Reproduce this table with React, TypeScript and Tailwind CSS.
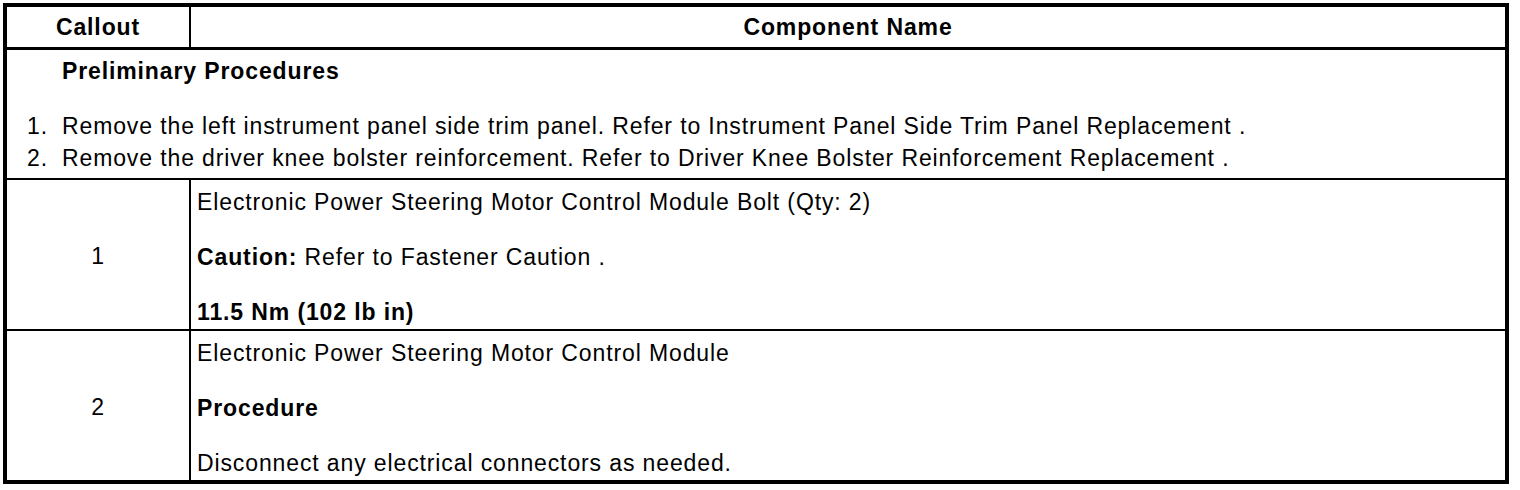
export default function App() {
  return (
    <div className="w-[1520px] h-[490px] bg-white p-[3px] font-['Liberation_Sans',Arial,Helvetica,sans-serif] text-[23px] tracking-[0.88px] text-black">
      <div className="w-[1506px] border-4 border-black">
        <div className="grid grid-cols-[184px_1fr] h-[43px] border-b-[3px] border-black font-bold">
          <div className="flex items-center justify-center border-r-2 border-black">Callout</div>
          <div className="flex items-center justify-center">Component Name</div>
        </div>

        <div className="border-b-2 border-black pt-[7px] pb-[4px]">
          <div className="pl-[55px] font-bold leading-[28px]">Preliminary Procedures</div>
          <ol className="mt-[25px] leading-[32px]">
            <li className="flex">
              <span className="w-[55px] pl-[20px]">1.</span>
              <span>Remove the left instrument panel side trim panel. Refer to Instrument Panel Side Trim Panel Replacement .</span>
            </li>
            <li className="flex">
              <span className="w-[55px] pl-[20px]">2.</span>
              <span>Remove the driver knee bolster reinforcement. Refer to Driver Knee Bolster Reinforcement Replacement .</span>
            </li>
          </ol>
        </div>

        <div className="grid grid-cols-[184px_1fr] border-b-2 border-black">
          <div className="flex items-center justify-center border-r-2 border-black pt-[4px]">1</div>
          <div className="pl-[6px] pt-[9px] pb-[4px] leading-[26px] flex flex-col gap-[29px]">
            <p>Electronic Power Steering Motor Control Module Bolt (Qty: 2)</p>
            <p>
              <span className="font-bold">Caution:</span> Refer to Fastener Caution .
            </p>
            <p className="font-bold">11.5 Nm (102 lb in)</p>
          </div>
        </div>

        <div className="grid grid-cols-[184px_1fr]">
          <div className="flex items-center justify-center border-r-2 border-black pt-[4px]">2</div>
          <div className="pl-[6px] pt-[9px] pb-[4px] leading-[26px] flex flex-col gap-[29px]">
            <p>Electronic Power Steering Motor Control Module</p>
            <p className="font-bold">Procedure</p>
            <p>Disconnect any electrical connectors as needed.</p>
          </div>
        </div>
      </div>
    </div>
  )
}
